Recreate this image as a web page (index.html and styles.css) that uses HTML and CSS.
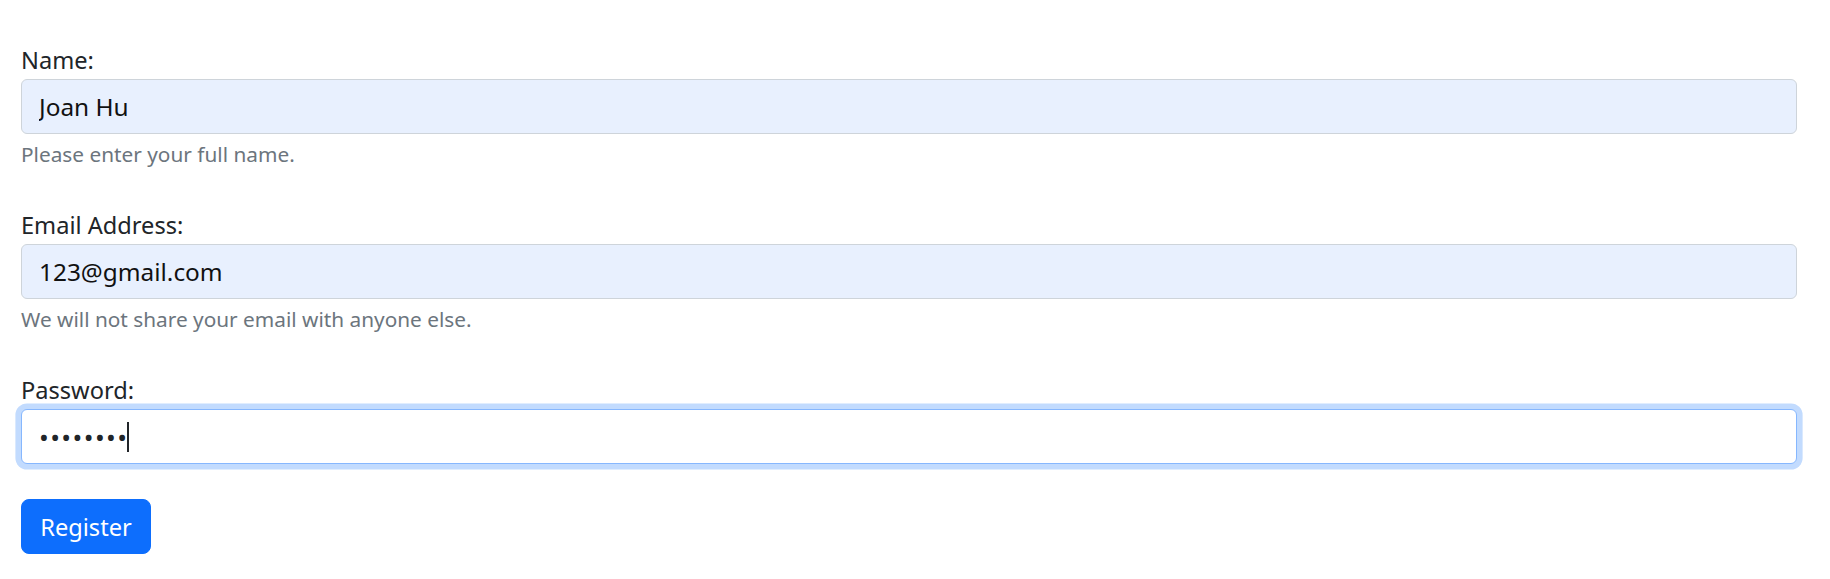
FILE: index.html
```html
<!DOCTYPE html>
<html lang="en">
<head>
<meta charset="utf-8">
<title>Register</title>
<link rel="stylesheet" href="styles.css">
</head>
<body>
<form class="form">
  <div class="group">
    <label class="label" for="name">Name:</label>
    <input class="control autofill" id="name" type="text" value="Joan Hu">
    <div class="help">Please enter your full name.</div>
  </div>
  <div class="group">
    <label class="label" for="email">Email Address:</label>
    <input class="control autofill" id="email" type="email" value="123@gmail.com">
    <div class="help">We will not share your email with anyone else.</div>
  </div>
  <div class="group">
    <label class="label" for="pw">Password:</label>
    <div class="control focused"><span class="dots">••••••••</span><span class="caret"></span></div>
  </div>
  <button class="btn" type="button">Register</button>
</form>
</body>
</html>
```
FILE: styles.css
```css
html, body {
  margin: 0;
  padding: 0;
  background: #ffffff;
}
body {
  font-family: "Noto Sans", "Open Sans", "Liberation Sans", sans-serif;
  color: #212529;
}
.form {
  display: flex;
  flex-direction: column;
  align-items: stretch;
  padding: 43px 33px 0 21px;
}
.group {
  display: flex;
  flex-direction: column;
  margin-bottom: 39px;
}
.group:last-of-type {
  margin-bottom: 35px;
}
.label {
  font-size: 23.6px;
  line-height: 34px;
  margin-bottom: 2px;
  color: #212529;
}
.control {
  box-sizing: border-box;
  height: 55px;
  width: 100%;
  margin: 0;
  padding: 0 17px;
  font-family: inherit;
  font-size: 24.4px;
  color: #111111;
  border: 1.4px solid #ced4da;
  border-radius: 6px;
  background: #ffffff;
  outline: none;
}
.autofill {
  background: #e8f0fe;
}
.focused {
  display: flex;
  align-items: center;
  border-color: #86b7fe;
  box-shadow: 0 0 0 5.6px #c2dbfe;
}
.dots {
  font-size: 26px;
  letter-spacing: 1.4px;
  color: #212529;
}
.caret {
  display: inline-block;
  width: 2px;
  height: 30px;
  background: #212529;
  margin-left: -1px;
}
.help {
  margin-top: 5.6px;
  font-size: 20.8px;
  line-height: 29.4px;
  color: #6c757d;
}
.btn {
  align-self: flex-start;
  box-sizing: border-box;
  width: 130px;
  height: 55px;
  padding: 0;
  font-family: inherit;
  font-size: 23.6px;
  color: #ffffff;
  background: #0d6efd;
  border: 1px solid #0d6efd;
  border-radius: 8px;
}
```
